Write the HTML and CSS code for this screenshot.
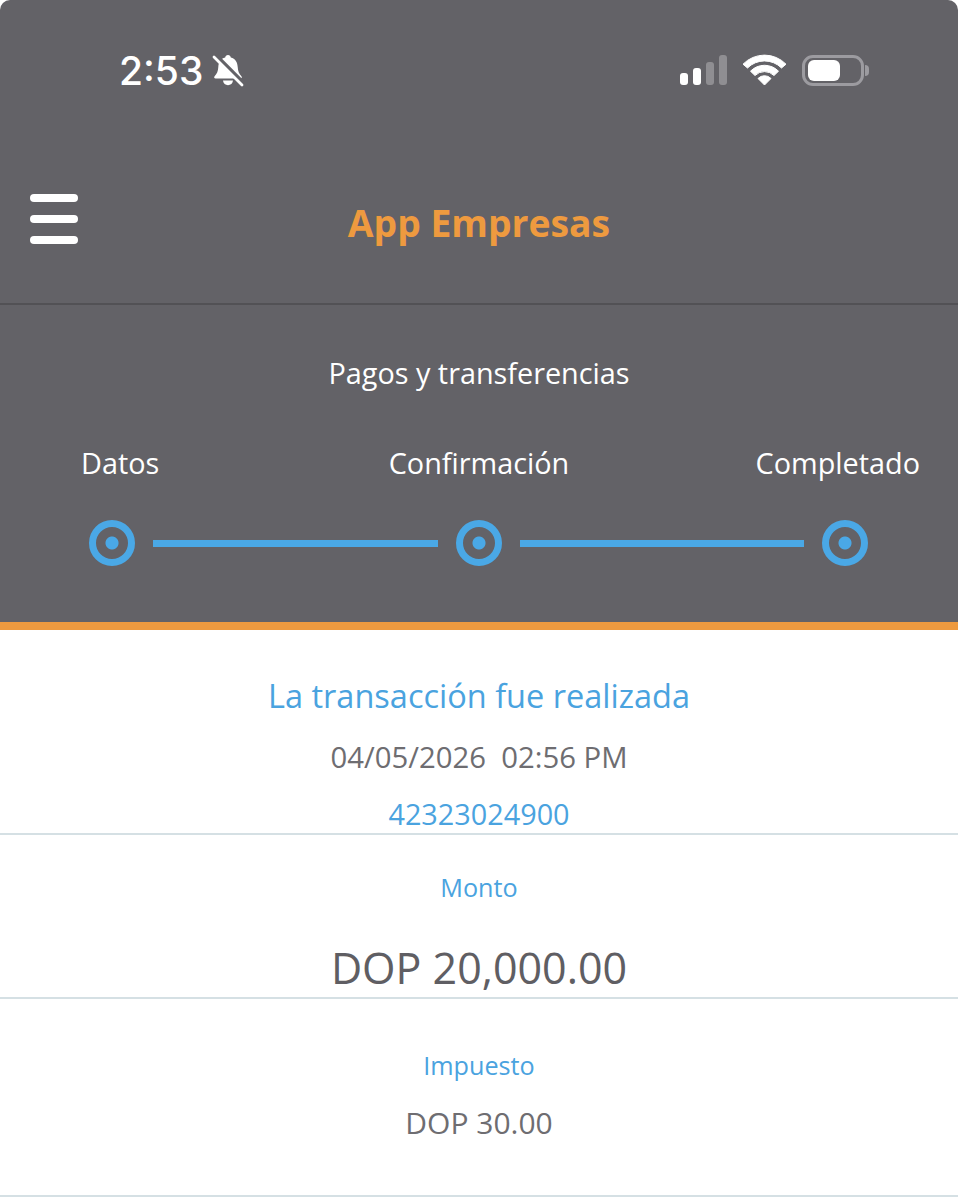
FILE: index.html
```html
<!DOCTYPE html>
<html lang="es">
<head>
	<meta charset="utf-8">
	<title>App Empresas</title>
	<link rel="stylesheet" href="styles.css">
</head>
<body>
	<div class="topPanel">
		<div class="statusBar">
			<div class="statusLeft">
				<span class="clock">2:53</span>
				<svg class="bell" width="34" height="34" viewBox="0 0 34 34">
					<path d="M17 1c1.600 0 2.600 1 2.800 2.400 4.600 1.200 6.700 5 6.900 9.600.2 4.200 1.300 6.700 3.700 9.200.9 1 .4 2.300-1 2.300H4.600c-1.400 0-1.900-1.300-1-2.300 2.400-2.500 3.500-5 3.700-9.200.2-4.600 2.300-8.400 6.900-9.600C14.400 2 15.400 1 17 1z" fill="#fff"/>
					<path d="M12 26.500h10c-.3 2.800-2.400 4.700-5 4.700s-4.700-1.900-5-4.700z" fill="#fff"/>
					<path d="M4.500 1 L33 29.500" stroke="#636267" stroke-width="4"/>
					<path d="M3 3 L31 31" stroke="#fff" stroke-width="2.800" stroke-linecap="round"/>
				</svg>
			</div>
			<div class="statusRight">
				<div class="signal">
					<span class="bar bar1"></span>
					<span class="bar bar2"></span>
					<span class="bar bar3 off"></span>
					<span class="bar bar4 off"></span>
				</div>
				<svg class="wifi" width="43" height="32" viewBox="0 0 43 32">
					<path d="M0 10.200A30 30 0 0 1 43 10.200L38.500 14A24 24 0 0 0 4.500 14Z" fill="#fff" stroke="#fff" stroke-width="1" stroke-linejoin="round"/>
					<path d="M7.500 17.200A19.500 19.500 0 0 1 35.500 17.200L31 21.500A13.500 13.500 0 0 0 12 21.500Z" fill="#fff" stroke="#fff" stroke-width="1" stroke-linejoin="round"/>
					<path d="M15 24.500A9 9 0 0 1 28 24.500L21.500 31Z" fill="#fff" stroke="#fff" stroke-width="1" stroke-linejoin="round"/>
				</svg>
				<div class="battery">
					<div class="batteryShell"><div class="batteryFill"></div></div>
					<div class="batteryCap"></div>
				</div>
			</div>
		</div>
		<div class="appBar">
			<button class="menuBtn">
				<span></span>
				<span></span>
				<span></span>
			</button>
			<h1 class="appTitle">App Empresas</h1>
		</div>
		<div class="stepsArea">
			<div class="stepsTitle">Pagos y transferencias</div>
			<div class="stepLabels">
				<span class="labelStart">Datos</span>
				<span>Confirmación</span>
				<span class="labelEnd">Completado</span>
			</div>
			<div class="stepTrack">
				<div class="stepDot"></div>
				<div class="stepLine"></div>
				<div class="stepDot"></div>
				<div class="stepLine"></div>
				<div class="stepDot"></div>
			</div>
		</div>
	</div>
	<div class="details">
		<div class="block blockHead">
			<div class="headline">La transacción fue realizada</div>
			<div class="dateLine">04/05/2026&nbsp; 02:56 PM</div>
			<div class="refLine">42323024900</div>
		</div>
		<div class="block blockAmount">
			<div class="fieldLabel">Monto</div>
			<div class="amount">DOP 20,000.00</div>
		</div>
		<div class="block blockTax">
			<div class="fieldLabel">Impuesto</div>
			<div class="taxValue">DOP 30.00</div>
		</div>
	</div>
</body>
</html>
```

FILE: styles.css
```css
html {
	background-color: #ffffff;
}
body {
	margin: 0;
	height: 1200px;
	overflow: hidden;
	background-color: #ffffff;
	font-family: 'Open Sans', 'Noto Sans', sans-serif;
	color: #636267;
}
.topPanel {
	background-color: #636267;
	border-top-left-radius: 10px;
	border-top-right-radius: 10px;
	border-bottom: 8px solid #ee9a3f;
	height: 622px;
	color: #ffffff;
}
.statusBar {
	height: 140px;
	display: flex;
	justify-content: space-between;
	align-items: flex-start;
	padding: 48px 89px 0 119px;
	box-sizing: border-box;
}
.statusLeft {
	display: flex;
	align-items: center;
	gap: 8px;
}
.clock {
	font-family: 'Inter', 'Liberation Sans', sans-serif;
	font-size: 39px;
	line-height: 46px;
	font-weight: 500;
}
.statusRight {
	display: flex;
	align-items: center;
	gap: 16px;
	height: 44px;
}
.signal {
	display: flex;
	align-items: flex-end;
	gap: 5px;
	height: 30px;
}
.bar {
	width: 8px;
	border-radius: 3px;
	background-color: #ffffff;
}
.bar1 { height: 12px; }
.bar2 { height: 17px; }
.bar3 { height: 23px; }
.bar4 { height: 30px; }
.off {
	background-color: #8f8e92;
}
.battery {
	display: flex;
	align-items: center;
	gap: 1px;
}
.batteryShell {
	width: 62px;
	height: 31px;
	box-sizing: border-box;
	border: 3px solid #9c9ba0;
	border-radius: 11px;
	padding: 2px 3px;
}
.batteryFill {
	width: 32px;
	height: 100%;
	background-color: #ffffff;
	border-radius: 6px;
}
.batteryCap {
	width: 4px;
	height: 11px;
	background-color: #9c9ba0;
	border-radius: 0 4px 4px 0;
}
.appBar {
	height: 165px;
	box-sizing: border-box;
	border-bottom: 2px solid #525155;
	display: flex;
	align-items: center;
	justify-content: center;
	position: relative;
	padding-top: 2px;
}
.appTitle {
	margin: 0;
	font-size: 37.300px;
	line-height: 50px;
	font-weight: 700;
	color: #ee9a3f;
}
.menuBtn {
	position: absolute;
	left: 30px;
	top: 54px;
	background: none;
	border: none;
	padding: 0;
	width: 48px;
	display: flex;
	flex-direction: column;
	gap: 13px;
}
.menuBtn span {
	display: block;
	height: 8px;
	border-radius: 4px;
	background-color: #ffffff;
}
.stepsArea {
	text-align: center;
}
.stepsTitle {
	padding-top: 49px;
	font-size: 28.800px;
	line-height: 38px;
}
.stepLabels {
	display: grid;
	grid-template-columns: 1fr auto 1fr;
	padding: 52px 38px 0;
	font-size: 28.800px;
	line-height: 38px;
}
.labelStart {
	justify-self: start;
	margin-left: 43px;
}
.labelEnd {
	justify-self: end;
}
.stepTrack {
	display: flex;
	align-items: center;
	padding: 38px 90px 0 89px;
	gap: 18px;
}
.stepDot {
	width: 46px;
	height: 46px;
	box-sizing: border-box;
	flex: none;
	border: 7px solid #4aa8e6;
	border-radius: 50%;
	background: radial-gradient(circle, #4aa8e6 0, #4aa8e6 6px, transparent 7px);
}
.stepLine {
	flex: 1;
	height: 7px;
	background-color: #4aa8e6;
}
.details {
	text-align: center;
}
.block {
	border-bottom: 2px solid #d5e0e4;
}
.blockHead {
	height: 205px;
	box-sizing: border-box;
	padding-top: 44px;
}
.headline {
	font-size: 32.500px;
	line-height: 44px;
	color: #4aa3df;
}
.dateLine {
	margin-top: 19px;
	font-size: 29.300px;
	line-height: 40px;
	color: #6e6d71;
}
.refLine {
	margin-top: 18px;
	font-size: 28.800px;
	line-height: 38px;
	color: #4aa3df;
}
.blockAmount {
	height: 164px;
	box-sizing: border-box;
	padding-top: 35px;
}
.fieldLabel {
	font-size: 25.200px;
	line-height: 34px;
	color: #4aa3df;
}
.amount {
	margin-top: 34px;
	font-size: 43px;
	line-height: 60px;
	color: #5f5e63;
}
.blockTax {
	height: 198px;
	box-sizing: border-box;
	padding-top: 49px;
}
.taxValue {
	margin-top: 21px;
	font-size: 30px;
	line-height: 40px;
	color: #6e6d71;
}
```
